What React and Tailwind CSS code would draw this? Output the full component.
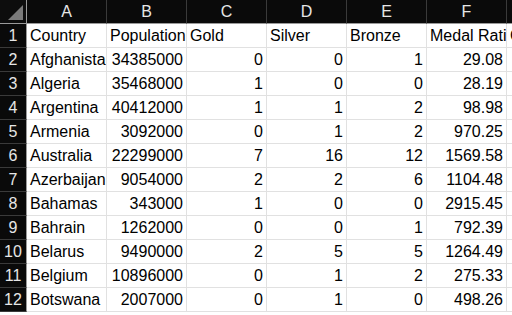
// Spreadsheet view: medal table
const COLS = ['A', 'B', 'C', 'D', 'E', 'F', 'G'];

const ROWS = [
  ['Country', 'Population', 'Gold', 'Silver', 'Bronze', 'Medal Ratio', 'Gold Ratio'],
  ['Afghanistan', 34385000, 0, 0, 1, '29.08'],
  ['Algeria', 35468000, 1, 0, 0, '28.19'],
  ['Argentina', 40412000, 1, 1, 2, '98.98'],
  ['Armenia', 3092000, 0, 1, 2, '970.25'],
  ['Australia', 22299000, 7, 16, 12, '1569.58'],
  ['Azerbaijan', 9054000, 2, 2, 6, '1104.48'],
  ['Bahamas', 343000, 1, 0, 0, '2915.45'],
  ['Bahrain', 1262000, 0, 0, 1, '792.39'],
  ['Belarus', 9490000, 2, 5, 5, '1264.49'],
  ['Belgium', 10896000, 0, 1, 2, '275.33'],
  ['Botswana', 2007000, 0, 1, 0, '498.26'],
];

function Cell({ value, header }) {
  const numeric = !header && typeof value !== 'undefined' && typeof value !== 'string' || (!header && /^[\d.]+$/.test(String(value)));
  return (
    <div
      className={`h-6 border-r border-b border-[#e1e1e1] bg-white overflow-hidden whitespace-nowrap px-[3px] leading-[23px] text-black ${
        numeric ? 'text-right' : 'text-left'
      }`}
    >
      {value}
    </div>
  );
}

export default function App() {
  return (
    <div
      className="w-[512px] h-[315px] overflow-hidden bg-white text-[16px]"
      style={{ fontFamily: '"Liberation Sans", Arial, sans-serif' }}
    >
      <div className="grid grid-cols-[27px_repeat(6,80px)_80px]">
        {/* corner */}
        <div className="relative h-6 bg-[#0d0d0d] border-r border-b border-[#9a9a9a]">
          <div className="absolute left-[8px] top-[5px] w-[15px] h-[15px] bg-[#7a7a7a] [clip-path:polygon(100%_0,100%_100%,0_100%)]" />
        </div>
        {COLS.map((c) => (
          <div
            key={c}
            className="h-6 bg-[#0a0a0a] border-r border-[#3a3a3a] border-b border-b-[#9a9a9a] text-center leading-[23px] text-[#e6e6e6]"
          >
            {c}
          </div>
        ))}

        {ROWS.map((row, i) => (
          <div key={i} className="contents">
            <div className="h-6 bg-[#0a0a0a] border-r border-r-[#9a9a9a] border-b border-[#3a3a3a] text-center leading-[23px] text-[#e6e6e6] overflow-hidden">
              {i + 1}
            </div>
            {COLS.map((c, j) => (
              <Cell key={c} value={row[j]} header={i === 0} />
            ))}
          </div>
        ))}
      </div>
    </div>
  );
}
